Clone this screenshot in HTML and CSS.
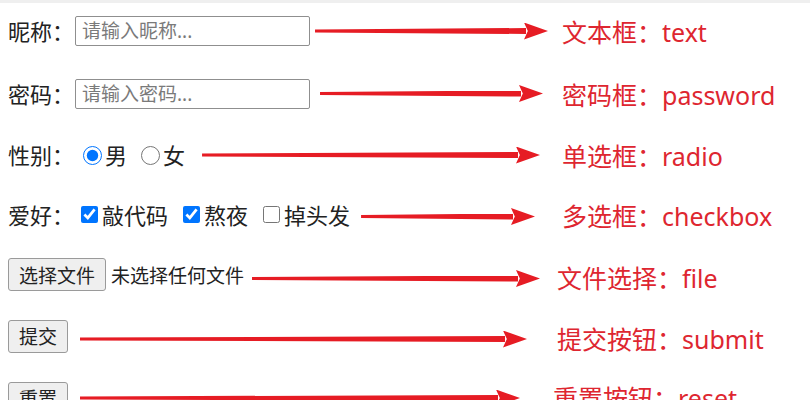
FILE: index.html
```html
<!DOCTYPE html>
<html lang="zh-CN">
<head>
<meta charset="utf-8">
<title>表单控件</title>
<link rel="stylesheet" href="styles.css">
</head>
<body>
<form class="page">
  <div class="row r1">
    <div class="left">
      <span class="label">昵称：</span>
      <input class="field" type="text" placeholder="请输入昵称...">
      <span class="arrow"><span class="shaft"></span><span class="head"></span></span>
    </div>
    <span class="note">文本框：text</span>
  </div>
  <div class="row r2">
    <div class="left">
      <span class="label">密码：</span>
      <input class="field" type="password" placeholder="请输入密码...">
      <span class="arrow"><span class="shaft"></span><span class="head"></span></span>
    </div>
    <span class="note">密码框：password</span>
  </div>
  <div class="row r3">
    <div class="left">
      <span class="label">性别：</span>
      <input class="radio first" type="radio" name="sex" checked><span class="opt">男</span>
      <input class="radio" type="radio" name="sex"><span class="opt">女</span>
      <span class="arrow"><span class="shaft"></span><span class="head"></span></span>
    </div>
    <span class="note">单选框：radio</span>
  </div>
  <div class="row r4">
    <div class="left">
      <span class="label">爱好：</span>
      <input class="check first" type="checkbox" checked><span class="opt">敲代码</span>
      <input class="check" type="checkbox" checked><span class="opt">熬夜</span>
      <input class="check" type="checkbox"><span class="opt">掉头发</span>
      <span class="arrow"><span class="shaft"></span><span class="head"></span></span>
    </div>
    <span class="note">多选框：checkbox</span>
  </div>
  <div class="row r5">
    <div class="left">
      <span class="btn wide">选择文件</span><span class="filetext">未选择任何文件</span>
      <span class="arrow"><span class="shaft"></span><span class="head"></span></span>
    </div>
    <span class="note">文件选择：file</span>
  </div>
  <div class="row r6">
    <div class="left">
      <button class="btn" type="submit">提交</button>
      <span class="arrow"><span class="shaft"></span><span class="head"></span></span>
    </div>
    <span class="note">提交按钮：submit</span>
  </div>
  <div class="row r7">
    <div class="left">
      <button class="btn" type="reset">重置</button>
      <span class="arrow"><span class="shaft"></span><span class="head"></span></span>
    </div>
    <span class="note">重置按钮：reset</span>
  </div>
</form>
</body>
</html>
```
FILE: styles.css
```css
html, body {
  margin: 0;
  padding: 0;
  background: #ffffff;
  overflow: hidden;
}
body {
  box-shadow: inset 0 3px 0 #efefef;
  height: 400px;
  font-family: "Noto Sans", "Noto Sans CJK SC", sans-serif;
  color: #222222;
}
.page {
  margin: 0;
  padding: 0 0 0 8px;
}
.row {
  display: grid;
  grid-template-columns: 545px auto;
  align-items: center;
  height: 62px;
}
.r2 { height: 63px; }
.r3 { height: 60px; }
.r4 { height: 59px; }
.r5 { height: 61px; }
.left {
  display: flex;
  align-items: center;
  height: 100%;
}
.label {
  font-size: 22px;
  line-height: 30px;
  white-space: nowrap;
}
.field {
  box-sizing: border-box;
  width: 235px;
  height: 30px;
  margin: 0 0 0 1px;
  padding: 0 6px;
  border: 1px solid #8f8f8f;
  border-radius: 2px;
  font-family: "Noto Sans", "Noto Sans CJK SC", sans-serif;
  font-size: 19px;
  color: #222;
  background: #fff;
}
.field::placeholder {
  color: #7a7a7a;
}
.radio {
  width: 19px;
  height: 19px;
  margin: 0 3px 0 14px;
}
.radio.first { margin-left: 9px; }
.check {
  width: 17px;
  height: 17px;
  margin: 0 4px 0 15px;
}
.check.first { margin-left: 7px; }
.opt {
  font-size: 22px;
  line-height: 30px;
  white-space: nowrap;
}
.btn {
  box-sizing: border-box;
  display: inline-flex;
  align-items: center;
  justify-content: center;
  height: 33px;
  width: 60px;
  margin: 0;
  padding: 0;
  border: 1px solid #9a9a9a;
  border-radius: 3px;
  background: #efefef;
  font-family: "Noto Sans", "Noto Sans CJK SC", sans-serif;
  font-size: 19px;
  color: #222;
}
.btn.wide { width: 98px; }
.filetext {
  margin-left: 5px;
  font-size: 19px;
  white-space: nowrap;
}
.arrow {
  flex: 1;
  display: flex;
  align-items: center;
  height: 18px;
}
.shaft {
  flex: 1;
  height: 6px;
  background: #e61c24;
  clip-path: polygon(0 25%, 100% 0, 100% 100%, 0 75%);
}
.head {
  width: 24px;
  height: 17px;
  margin-left: -2px;
  background: #e61c24;
  clip-path: polygon(0 0, 100% 50%, 0 100%, 16% 50%);
}
.note {
  font-size: 25px;
  color: #de2630;
  white-space: nowrap;
  margin-top: 0;
  margin-left: 9px;
}
.r1 .arrow { margin: 0 5px 0 5px; }
.r2 .arrow { margin: 0 10px 0 10px; }
.r3 .arrow { margin: 0 13px 0 17px; }
.r4 .arrow { margin: 4px 18px 0 11px; }
.r5 .arrow { margin: 8px 13px 0 8px; }
.r5 .note { margin-left: 4px; margin-top: 4px; }
.r6 .arrow { margin: 6px 26px 0 12px; }
.r6 .note { margin-left: 4px; margin-top: 4px; }
.r7 .arrow { margin: 0 33px 0 12px; }
.r7 .note { margin-left: 0; margin-top: -2px; }
```
